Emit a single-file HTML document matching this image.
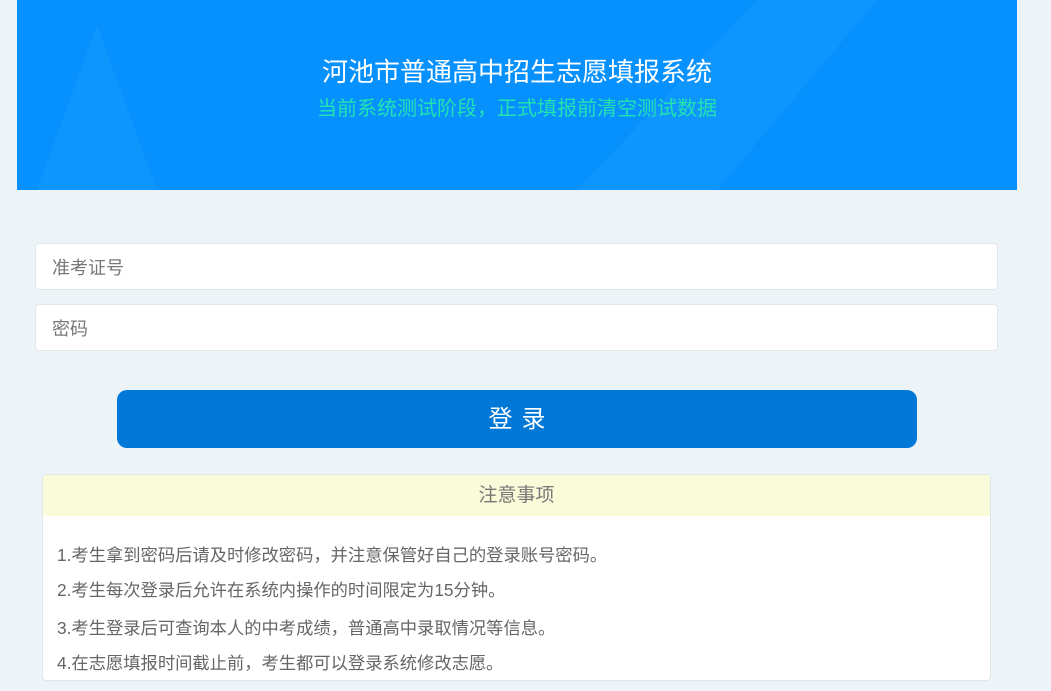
<!DOCTYPE html>
<html><head><meta charset="utf-8"><style>
*{margin:0;padding:0;box-sizing:border-box}
body{width:1051px;height:691px;background:#edf4f8;font-family:"Liberation Sans","Noto Sans CJK SC",sans-serif;position:relative;overflow:hidden}
.banner{position:absolute;left:17px;top:0;width:1000px;height:190px;background:#0691fe;overflow:hidden}
.t1{position:absolute;left:0;width:1000px;top:52px;text-align:center;color:#fff;font-size:26px}
.t2{position:absolute;left:0;width:1000px;top:92px;text-align:center;color:#22e3b0;font-size:20px}
.inp{position:absolute;left:35px;width:963px;height:47px;background:#fff;border:1px solid #e0e6ea;border-radius:4px;color:#777;font-size:18px;padding:10px 0 0 16px}
.btn{position:absolute;left:117px;top:390px;width:800px;height:58px;background:#0078d7;border-radius:10px;color:#fff;font-size:24px;text-align:center;line-height:60px;letter-spacing:9px;padding-left:9px}
.box{position:absolute;left:42px;top:474px;width:949px;height:207px;background:#fff;border:1px solid #e2e6e8;border-radius:4px;overflow:hidden}
.hd{height:41px;background:#fafbd8;text-align:center;line-height:41px;color:#777;font-size:19px}
.box p{position:absolute;left:14px;color:#666;font-size:17.3px}
</style></head><body>
<div class="banner">
<svg width="1000" height="190" style="position:absolute;left:0;top:0"><polygon points="80,25 20,190 140,190" fill="#fff" opacity="0.04"/><polygon points="740,0 860,0 700,190 560,190" fill="#fff" opacity="0.04"/></svg>
<div class="t1">河池市普通高中招生志愿填报系统</div>
<div class="t2">当前系统测试阶段，正式填报前清空测试数据</div>
</div>
<div class="inp" style="top:243px">准考证号</div>
<div class="inp" style="top:304px">密码</div>
<div class="btn">登录</div>
<div class="box"><div class="hd">注意事项</div>
<p style="top:66px">1.考生拿到密码后请及时修改密码，并注意保管好自己的登录账号密码。</p>
<p style="top:101px">2.考生每次登录后允许在系统内操作的时间限定为15分钟。</p>
<p style="top:139px">3.考生登录后可查询本人的中考成绩，普通高中录取情况等信息。</p>
<p style="top:174px">4.在志愿填报时间截止前，考生都可以登录系统修改志愿。</p>
</div>
</body></html>
